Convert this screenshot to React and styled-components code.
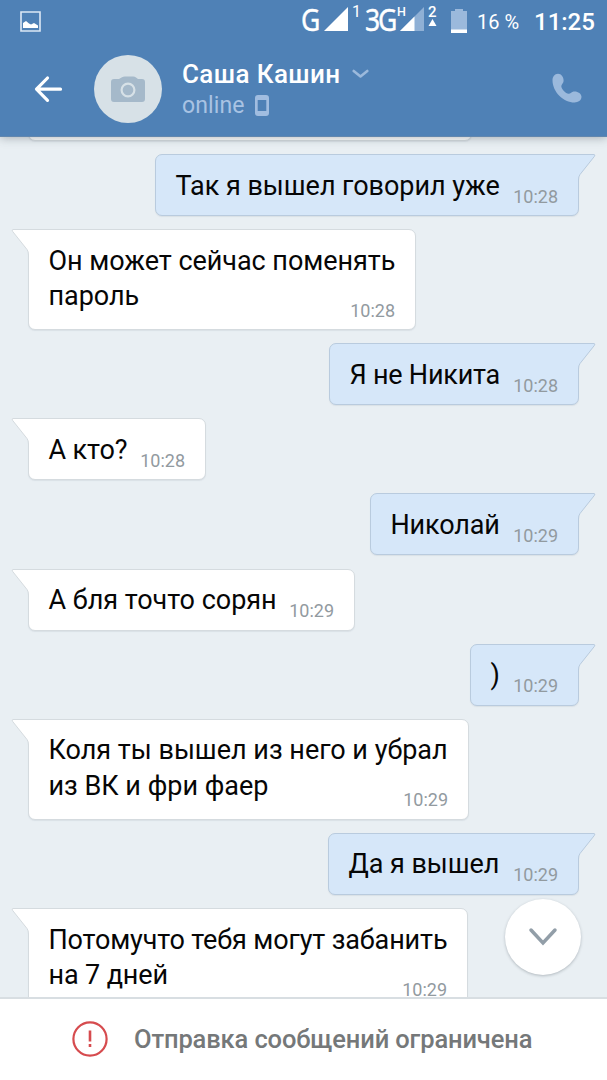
import React from 'react';
import styled, { createGlobalStyle } from 'styled-components';

const GlobalStyle = createGlobalStyle`
  * { box-sizing: border-box; }
  html, body { margin: 0; padding: 0; }
  body { font-family: Roboto, "Noto Sans", sans-serif; background: #e9eff3; }
  svg { display: block; flex: none; }
`;

const Screen = styled.div`
  width: 607px;
  height: 1080px;
  display: flex;
  flex-direction: column;
  overflow: hidden;
  background: #e9eff3;
`;

const TopPanel = styled.header`
  position: relative;
  z-index: 1;
  flex: none;
  height: 137px;
  background: #4f81b6;
  border-bottom: 1px solid #6287ae;
  box-shadow: 0 1px 9px rgba(60, 70, 80, 0.38);
`;

const StatusBar = styled.div`
  height: 42px;
  display: flex;
  align-items: flex-start;
  padding: 0 13px 0 20px;
  color: #fff;
`;

const StatusText = styled.span`
  flex: none;
  font-size: ${(p) => p.$size}px;
  line-height: 24px;
  font-weight: ${(p) => p.$weight || 400};
  letter-spacing: ${(p) => p.$spacing || 0}px;
  margin: ${(p) => p.$margin};
  width: ${(p) => p.$width}px;
  white-space: nowrap;
`;

const NetworkText = styled(StatusText)`
  font-family: "Noto Sans", sans-serif;
  transform: scaleX(0.87);
  transform-origin: left center;
  -webkit-text-stroke: 0.4px #fff;
`;

const StatusIcon = styled.svg`
  margin: ${(p) => p.$margin};
`;

const Toolbar = styled.div`
  height: 94px;
  display: flex;
  align-items: flex-start;
  padding: 13px 25px 0 33px;
`;

const BackIcon = styled.svg`
  margin: 20px 31px 0 0;
`;

const Avatar = styled.div`
  width: 68px;
  height: 68px;
  flex: none;
  border-radius: 50%;
  background: #d7e1e7;
  display: flex;
  align-items: center;
  justify-content: center;
`;

const Contact = styled.div`
  flex: 1;
  padding: 3px 0 0 20px;
`;

const NameRow = styled.div`
  display: flex;
  align-items: center;
  height: 32px;
  gap: 11px;
`;

const Name = styled.div`
  font-size: 26px;
  font-weight: 500;
  line-height: 32px;
  letter-spacing: 0.4px;
  color: #fff;
  white-space: nowrap;
`;

const PresenceRow = styled.div`
  display: flex;
  align-items: center;
  height: 31px;
  gap: 10px;
  color: #a9c3e3;
  font-size: 23px;
  line-height: 31px;
  letter-spacing: 0.1px;
`;

const CallIcon = styled.svg`
  margin-top: 18px;
`;

const Messages = styled.main`
  position: relative;
  flex: 1;
  min-height: 0;
  overflow: hidden;
  display: flex;
  flex-direction: column;
  gap: 13.1px;
  padding: 0 28px;
`;

const Bubble = styled.div`
  position: relative;
  flex: none;
  align-self: ${(p) => (p.$mine ? 'flex-end' : 'flex-start')};
  width: ${(p) => p.$width}px;
  height: ${(p) => (p.$tall ? 101 : 62)}px;
  display: flex;
  justify-content: space-between;
  align-items: flex-end;
  padding: 0 20px 5.4px 19.5px;
  border: 1px solid ${(p) => (p.$mine ? '#b9cbde' : '#d5dbdf')};
  border-radius: ${(p) => (p.$mine ? '7px 0 7px 7px' : '0 7px 7px 7px')};
  background: ${(p) => (p.$mine ? '#d6e7f9' : '#fff')};
  box-shadow: 0 1px 1px rgba(80, 100, 120, 0.1);
`;

const PreviousBubble = styled(Bubble)`
  height: 20px;
  margin-top: -16px;
`;

const Tail = styled.svg`
  position: absolute;
  top: -1px;
  ${(p) => (p.$mine ? 'right: -18px;' : 'left: -18px; transform: scaleX(-1);')}
`;

const MessageText = styled.div`
  width: 0;
  align-self: flex-start;
  padding-top: 13.6px;
  font-size: 27px;
  line-height: 35.5px;
  letter-spacing: ${(p) => p.$spacing}px;
  color: #060606;
`;

const Line = styled.div`
  width: max-content;
  white-space: nowrap;
`;

const Time = styled.time`
  font-size: 18px;
  line-height: 26px;
  color: #929a9f;
`;

const ScrollButton = styled.button`
  position: absolute;
  right: 26px;
  bottom: 22px;
  width: 76px;
  height: 76px;
  padding: 0;
  border: 0;
  border-radius: 50%;
  display: flex;
  align-items: center;
  justify-content: center;
  background: #fff;
  box-shadow: 0 1px 3px rgba(60, 70, 80, 0.32);
`;

const Notice = styled.footer`
  flex: none;
  height: 83px;
  display: flex;
  align-items: center;
  gap: 26px;
  padding: 0 0 1px 72px;
  border-top: 2px solid #d8dee2;
  background: #fff;
  color: #757879;
  font-size: 25.5px;
  font-weight: 500;
  letter-spacing: -0.13px;
  white-space: nowrap;
`;

const messages = [
  { mine: true, width: 424, spacing: -0.03, lines: ['Так я вышел говорил уже'], time: '10:28' },
  { width: 388, spacing: -0.04, lines: ['Он может сейчас поменять', 'пароль'], time: '10:28' },
  { mine: true, width: 250, spacing: -0.22, lines: ['Я не Никита'], time: '10:28' },
  { width: 178, spacing: -0.1, lines: ['А кто?'], time: '10:28' },
  { mine: true, width: 209, spacing: -0.15, lines: ['Николай'], time: '10:29' },
  { width: 327, spacing: -0.02, lines: ['А бля точто сорян'], time: '10:29' },
  { mine: true, width: 109, spacing: 0, lines: [')'], time: '10:29' },
  { width: 441, spacing: 0, lines: ['Коля ты вышел из него и убрал', 'из ВК и фри фаер'], time: '10:29' },
  { mine: true, width: 251, spacing: -0.05, lines: ['Да я вышел'], time: '10:29' },
  { width: 440, spacing: -0.14, lines: ['Потомучто тебя могут забанить', 'на 7 дней'], time: '10:29' },
];

function Message({ mine, width, spacing, lines, time }) {
  const fill = mine ? '#d6e7f9' : '#fff';
  const stroke = mine ? '#b9cbde' : '#d5dbdf';
  return (
    <Bubble $mine={mine} $width={width} $tall={lines.length > 1}>
      <Tail $mine={mine} width="22" height="30" viewBox="0 0 22 30">
        <path d="M0 .5H20Q21.6 .7 20.4 2.4L6 20.5Q4.5 22.5 4.5 26V29H0Z" fill={fill} />
        <path d="M0 .5H20Q21.6 .7 20.4 2.4L6 20.5Q4.5 22.5 4.5 26V30" fill="none" stroke={stroke} />
      </Tail>
      <MessageText $spacing={spacing}>
        {lines.map((line) => <Line key={line}>{line}</Line>)}
      </MessageText>
      <Time>{time}</Time>
    </Bubble>
  );
}

export default function App() {
  return (
    <Screen>
      <GlobalStyle />
      <TopPanel>
        <StatusBar>
          <StatusIcon $margin="11px 261px 0 0" width="21" height="21" viewBox="0 0 21 21">
            <path d="M1 1H20V20H1Z" fill="none" stroke="#dce8f5" strokeWidth="1.6" />
            <path d="M3 17V12L6 10L9 12.5L11 13.5L14 12L18 14.5V17Z" fill="#fff" />
          </StatusIcon>
          <NetworkText $size={30.5} $margin="7px 0 0 -1px" $width={23}>G</NetworkText>
          <StatusIcon $margin="7px 0 0 0" width="24" height="24"><path d="M24 0V24H0Z" fill="#fff" /></StatusIcon>
          <StatusText $size={16} $margin="0 0 0 4px" $width={9}>1</StatusText>
          <NetworkText $size={30.5} $spacing={-2.4} $margin="7px 0 0 4px" $width={31}>3G</NetworkText>
          <StatusText $size={12.5} $weight={500} $margin="0 0 0 1px" $width={9}>H</StatusText>
          <StatusIcon $margin="7px 0 0 -6px" width="24" height="24">
            <path d="M24 0V24H0Z" fill="#8fb0d5" />
            <path d="M14.5 9.5V24H0Z" fill="#fff" />
          </StatusIcon>
          <StatusText $size={15} $weight={500} $margin="0 0 0 4px" $width={9}>2</StatusText>
          <StatusIcon $margin="19px 0 0 -9px" width="9" height="7"><path d="M4.5 0L8.5 7H.5Z" fill="#fff" /></StatusIcon>
          <StatusIcon $margin="9px 0 0 14px" width="16" height="24">
            <path d="M4 0H12V2H16V24H0V2H4Z" fill="#9bb9dc" />
            <path d="M0 20.5H16V24H0Z" fill="#fff" />
          </StatusIcon>
          <StatusText $size={20} $margin="10px 0 0 10px" $width={43}>16 %</StatusText>
          <StatusText $size={24} $weight={500} $margin="10px 0 0 14px" $width={62}>11:25</StatusText>
        </StatusBar>
        <Toolbar>
          <BackIcon width="30" height="28" viewBox="0 0 30 28" fill="none" stroke="#fff" strokeWidth="3.2" strokeLinecap="round" strokeLinejoin="round">
            <path d="M14.5 3L3.5 14.2L14.5 25.3M4 14.2H27.5" />
          </BackIcon>
          <Avatar>
            <svg width="34" height="26" viewBox="0 0 34 26">
              <path d="M3 3H8L11 1.2Q12 .5 14 .5H22Q24 .5 25 1.5L27 3H31Q34 3 34 6V23Q34 26 31 26H3Q0 26 0 23V6Q0 3 3 3Z" fill="#a5b9ca" />
              <circle cx="17" cy="14" r="6.4" fill="none" stroke="#d7e1e7" strokeWidth="2.2" />
            </svg>
          </Avatar>
          <Contact>
            <NameRow>
              <Name>Саша Кашин</Name>
              <svg width="17" height="10" viewBox="0 0 17 10" fill="none" stroke="#9bb9dc" strokeWidth="2.6" strokeLinecap="round" strokeLinejoin="round"><path d="M1.7 2L8.5 7.5L15.3 2" /></svg>
            </NameRow>
            <PresenceRow>
              <span>online</span>
              <svg width="14" height="21" viewBox="0 0 14 21"><path fillRule="evenodd" d="M3 0H11Q14 0 14 3V18Q14 21 11 21H3Q0 21 0 18V3Q0 0 3 0ZM2.7 5V16H11.3V5Z" fill="#a1bde0" /></svg>
            </PresenceRow>
          </Contact>
          <CallIcon width="30" height="30" viewBox="0 0 30 30">
            <path d="M6 .7C9.3.7 11.8 4 11.6 8C11.5 10 9.3 11.4 9.3 13.2C9.3 15.7 13.8 20.5 16.5 20.8C18.4 21 19.5 18.9 21.6 18.5C25.5 18 29.5 20.6 29.5 23.8C29.5 27.4 26 29.5 22.6 29.5C11.4 29.5.5 18.8.5 7.2C.5 3.8 2.6.7 6 .7Z" fill="#9bb9dc" />
          </CallIcon>
        </Toolbar>
      </TopPanel>
      <Messages>
        <PreviousBubble $width={444} />
        {messages.map((m, i) => <Message key={i} {...m} />)}
        <ScrollButton aria-label="Вниз">
          <svg width="30" height="20" viewBox="0 0 30 20" fill="none" stroke="#929ea8" strokeWidth="3.5" strokeLinecap="round" strokeLinejoin="miter"><path d="M3 3L15 16L27 3" /></svg>
        </ScrollButton>
      </Messages>
      <Notice>
        <svg width="36" height="36" viewBox="0 0 36 36" fill="none" stroke="#d64b4e">
          <circle cx="18" cy="18" r="16.6" strokeWidth="2.2" />
          <path d="M18 9.5V20.5M18 23V26" strokeWidth="2.6" />
        </svg>
        <span>Отправка сообщений ограничена</span>
      </Notice>
    </Screen>
  );
}
